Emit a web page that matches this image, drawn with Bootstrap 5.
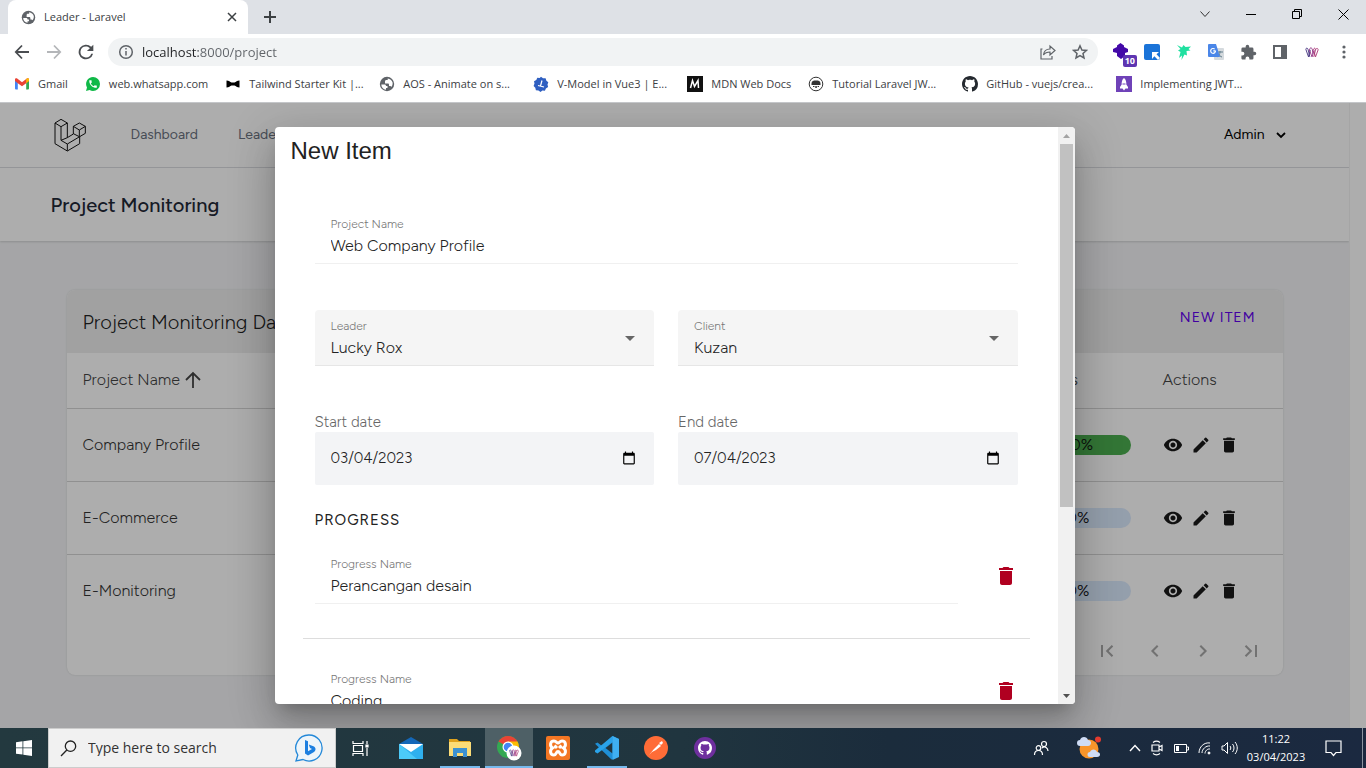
<!DOCTYPE html>
<html lang="en">
<head>
<meta charset="utf-8">
<meta name="viewport" content="width=device-width, initial-scale=1">
<title>Leader - Laravel</title>
<link href="https://cdn.jsdelivr.net/npm/bootstrap@5.3.0/dist/css/bootstrap.min.css" rel="stylesheet">
<style>
  :root { --ui: "Open Sans", "Noto Sans", sans-serif; --app: "Figtree", Inter, "Liberation Sans", sans-serif; }
  body { font-family: var(--ui); font-size: 12px; line-height: 16px; color: #3c4043; background: #fff; }
  svg { display: block; flex: none; }
  button { border: 0; background: none; padding: 0; color: inherit; }
  a { color: inherit; text-decoration: none; }

  /* browser chrome */
  .tabstrip { background: #dee1e6; height: 34px; padding-left: 8px; }
  .tab-item { width: 240px; background: #fff; border-radius: 8px 8px 0 0; padding: 0 10px 0 13px; gap: 8px; font-size: 11px; }
  .newtab { width: 44px; }
  .winbtn { width: 46px; height: 28px; color: #000; }
  .cell { width: 32px; height: 32px; color: #5f6368; }
  .toolbar { height: 36px; padding: 0 6px; }
  .omnibox { height: 28px; border-radius: 14px; background: #f1f3f4; color: #5f6368; margin: 0 6px; padding: 0 2px 0 10px; }
  .omnibox input { border: 0; outline: 0; font-size: 13px; padding: 0 0 0 8px; color: transparent;
    background: linear-gradient(90deg, #202124 64px, #5f6368 64px); -webkit-background-clip: text; background-clip: text; }
  .bookmarks { height: 32px; padding: 0 14px 4px; gap: 17px; font-size: 11px; white-space: nowrap; }
  .bookmarks a { gap: 8px; }
  .bookmarks .cut { width: 137px; }
  .ext-count { right: -1px; bottom: 1px; background: #5e35b1; color: #fff; font-size: 9px; line-height: 12px; font-weight: 700; border-radius: 2px; padding: 0 2px; }

  /* application page */
  .viewport-area { font-family: var(--app); font-weight: 300; border-top: 1px solid #c4c6c9; }
  .app-page { background: #f3f4f6; }
  .gutter { width: 17px; background: #fff; border-left: 1px solid #f4f4f4; }
  .wrap { max-width: 1280px; width: 100%; margin: 0 auto; padding: 0 16px; }
  .topnav { background: #fff; height: 65px; border-bottom: 1px solid #dcdee2; font-size: 14px; font-weight: 400; color: #6b7280; }
  .topnav nav { gap: 40px; margin-left: 43px; }
  .topnav .user { color: #000; gap: 10px; padding-right: 12px; }
  .pagehead { background: #fff; height: 73px; box-shadow: 0 1px 2px rgba(0,0,0,.15); }
  .pagehead h1 { font-size: 20px; line-height: 28px; font-weight: 500; color: #1f2937; margin: 0; }
  .board { margin: 49px 16px 0; background: #fff; border-radius: 8px; box-shadow: 0 0 2px rgba(0,0,0,.15); overflow: hidden; font-size: 16px; color: #333; }
  .board-head { background: #eee; height: 63px; padding: 0 16px; font-size: 20px; color: #222; }
  .newitem { color: #6200ee; font-size: 14px; letter-spacing: 1px; font-weight: 400; padding: 0 11px; margin-bottom: 8px; }
  .board table { width: 100%; table-layout: fixed; }
  .board th { font-weight: 300; height: 55px; padding: 0 16px; border-bottom: 1px solid #d5d5d5; color: #444; }
  .board td { height: 73px; padding: 0 16px; border-bottom: 1px solid #d5d5d5; }
  .board tbody tr:last-child td { border-bottom: 0; }
  .c-prog { width: 146px; }
  .c-act { width: 136px; }
  .meter { height: 20px; border-radius: 10px; background: #dbeafe; color: #111; text-align: center; line-height: 20px; }
  .meter.done { background: #4caf50; }
  .acts { gap: 8px; color: #1a1a1a; }
  .pager { height: 48px; gap: 24px; padding-right: 20px; color: #a8a8a8; }

  /* dialog */
  .scrim { background: rgba(0,0,0,.32); padding: 24px 17px 24px 0; }
  .dialog { width: 800px; max-width: 90%; background: #fff; border-radius: 4px; color: #222; overflow: hidden;
    box-shadow: 0 11px 15px -7px rgba(0,0,0,.2), 0 24px 38px 3px rgba(0,0,0,.14), 0 9px 46px 8px rgba(0,0,0,.12); }
  .dialog h2 { font: 400 24px/32px "Liberation Sans", Arial, sans-serif; padding: 8px 16px; margin: 0; }
  .sheet { padding: 33px 28px 0; }
  .inset { padding: 0 12px; }
  .fld { height: 56px; padding: 8px 16px 0; border-bottom: 1px solid #f0f0f0; position: relative; }
  .fld label { display: block; font-size: 12px; line-height: 16px; color: #777; }
  .fld input, .fld select { display: block; width: 100%; border: 0; outline: 0; background: none; padding: 0; height: 27px; font-size: 16px; font-weight: 300; color: #222; appearance: none; }
  .fld.solid { background: #f5f5f5; border-radius: 4px 4px 0 0; border-bottom-color: #e6e6e6; }
  .fld .caret { position: absolute; right: 19px; top: 26px; color: #666; pointer-events: none; }
  .pair { gap: 24px; margin-top: 46px; }
  .pair > div { flex: 1 1 0; min-width: 0; }
  .datelabel { display: block; font-size: 15px; line-height: 20px; color: #666; }
  .datebox { height: 53px; background: #f3f4f6; padding: 0 18px 2px 16px; border-radius: 2px; }
  .datebox input { border: 0; outline: 0; background: none; padding: 0; font-size: 15px; font-weight: 300; color: #222; width: 100%; }
  .progress-title { font-size: 15px; line-height: 24px; font-weight: 400; letter-spacing: 1px; margin: 23px 0 16px; }
  .stage { gap: 36px; padding-bottom: 34px; }
  .stage .bin { color: #b00020; }
  .rule { border-top: 1px solid #ddd; margin-bottom: 24px; }
  .rail { width: 17px; background: #f1f1f1; }
  .rail span { height: 17px; }
  .thumb { height: 363px; margin: 0 2px; background: #c1c1c1; }

  /* taskbar */
  .taskbar { height: 40px; background: linear-gradient(90deg, #23393f, #20353f 50%, #1b2c3c 65%, #1b2940 100%); color: #fff; }
  .task { width: 48px; height: 40px; margin-right: 1px; }
  .task.view { margin-right: 3px; }
  .task.open { box-shadow: inset 0 -2px 0 #76b9ed; margin: 0 5px 0 4px; width: 40px; }
  .task.active { background: #4e6066; box-shadow: inset 0 -2px 0 #76b9ed; }
  .searchbox { width: 288px; height: 40px; background: #f1f1f1; border: 1px solid #ccc; color: #222; padding: 0 11px; gap: 11px; }
  .searchbox input { border: 0; outline: 0; background: none; font-size: 14px; color: #222; min-width: 0; }
  .searchbox input::placeholder { color: #333; opacity: 1; }
  .tray { width: 24px; height: 40px; }
  .tray.wide { width: 48px; }
  .tray.more { width: 32px; padding-right: 4px; }
  .tray.notes { width: 44px; margin-right: 7px; }
  .clock { width: 70px; text-align: center; font-size: 11px; line-height: 18px; }
  .peek { width: 4px; height: 40px; border-left: 1px solid #8b94a0; }
</style>
</head>
<body class="d-flex flex-column vh-100 overflow-hidden">

<svg width="0" height="0" class="position-absolute" aria-hidden="true">
  <defs>
    <symbol id="globe" viewBox="0 0 16 16"><circle cx="8" cy="8" r="7.200" fill="#5f6368"/><path d="M2.300 8.500h3.200c1 0 1.500.7 1.500 1.500h1.500v2H7v1.700C4.300 13.400 2.300 11.200 2.300 8.500zM6 5.500c0-1 .6-1.500 1.500-1.500h1.200V2.400c2.300.2 4.200 1.800 4.900 4 .2 1.800-.2 3.300-1.300 4.600-.2-.7-.8-1-1.500-1H10V8.700C10 8 9.500 7.500 8.800 7.500H6V6.200z" fill="#fff"/></symbol>
    <symbol id="octo" viewBox="0 0 16 16"><path d="M8 0C3.580 0 0 3.580 0 8c0 3.540 2.290 6.530 5.470 7.590.4.070.55-.170.55-.380 0-.190-.010-.820-.010-1.490-2.010.370-2.530-.490-2.690-.940-.090-.230-.480-.940-.820-1.130-.280-.150-.680-.520-.010-.530.630-.010 1.080.580 1.230.820.720 1.210 1.870.870 2.330.660.070-.520.280-.870.510-1.070-1.780-.2-3.640-.890-3.640-3.950 0-.870.310-1.590.820-2.150-.080-.2-.360-1.020.080-2.120 0 0 .670-.210 2.200.820.640-.180 1.320-.270 2-.270s1.360.090 2 .270c1.530-1.040 2.200-.820 2.200-.820.440 1.100.160 1.920.080 2.120.510.560.820 1.270.820 2.150 0 3.070-1.870 3.750-3.650 3.950.290.250.540.730.540 1.480 0 1.070-.010 1.930-.010 2.200 0 .210.150.460.550.380A8 8 0 0 0 16 8c0-4.420-3.580-8-8-8" fill="currentColor"/></symbol>
    <symbol id="bin" viewBox="0 0 24 24"><path d="M6 19c0 1.100.9 2 2 2h8c1.100 0 2-.9 2-2V7H6v12zM19 4h-3.500l-1-1h-5l-1 1H5v2h14V4z" fill="currentColor"/></symbol>
    <symbol id="eye" viewBox="0 0 24 24"><path d="M12 4.500C7 4.500 2.730 7.610 1 12c1.730 4.390 6 7.500 11 7.500s9.270-3.110 11-7.500c-1.730-4.390-6-7.500-11-7.500zM12 17c-2.760 0-5-2.240-5-5s2.240-5 5-5 5 2.240 5 5-2.240 5-5 5zm0-8c-1.660 0-3 1.340-3 3s1.340 3 3 3 3-1.340 3-3-1.340-3-3-3z" fill="currentColor"/></symbol>
    <symbol id="pen" viewBox="0 0 24 24"><path d="M3 17.250V21h3.750L17.810 9.940l-3.750-3.750L3 17.250zM20.710 7.040a1 1 0 0 0 0-1.410l-2.340-2.340a1 1 0 0 0-1.410 0l-1.830 1.830 3.750 3.750 1.830-1.830z" fill="currentColor"/></symbol>
    <symbol id="cal" viewBox="0 0 24 24"><path d="M20 3h-1V1h-2v2H7V1H5v2H4c-1.100 0-2 .9-2 2v16c0 1.100.9 2 2 2h16c1.100 0 2-.9 2-2V5c0-1.100-.9-2-2-2zm0 18H4V8h16v13z" fill="#000"/></symbol>
    <symbol id="www" viewBox="0 0 16 12"><g fill="none" stroke-width="1"><path d="M1 2.500C1 .5 3 .5 3.500 2.500L5.500 11M1 2.500L4 11 6 3" stroke="#3d2b7a"/><path d="M5 3C5.500 0 8 0 8.500 3L9 8M5 3l3 8 2.500-8" stroke="#8c2a80"/><path d="M9.500 3C10.500 0 12 1 12 3l-2 8M12 3c1-2.500 3-2 3 0l-3 8-2-7" stroke="#a83272"/></g></symbol>
  </defs>
</svg>

<header class="flex-shrink-0">
  <div class="tabstrip d-flex">
    <div class="tab-item d-flex align-items-center">
      <svg width="15" height="15"><use href="#globe"/></svg><span class="flex-grow-1">Leader - Laravel</span>
      <button aria-label="Close tab"><svg width="12" height="12" viewBox="0 0 12 12" stroke="#3c4043" stroke-width="1.500"><path d="M2 2l8 8M10 2l-8 8"/></svg></button>
    </div>
    <button class="newtab d-flex align-items-center justify-content-center" aria-label="New tab"><svg width="12" height="12" viewBox="0 0 12 12" stroke="#3c4043" stroke-width="2"><path d="M6 0v12M0 6h12"/></svg></button>
    <div class="ms-auto d-flex">
      <button class="winbtn d-flex align-items-center justify-content-center" aria-label="Search tabs"><svg width="12" height="12" viewBox="0 0 12 12" fill="none" stroke="#333"><path d="M1.500 3.500L6 8.500l4.500-5"/></svg></button>
      <button class="winbtn d-flex align-items-center justify-content-center" aria-label="Minimize"><svg width="10" height="10" viewBox="0 0 10 10" stroke="#000"><path d="M0 5.500h10"/></svg></button>
      <button class="winbtn d-flex align-items-center justify-content-center" aria-label="Restore"><svg width="10" height="10" viewBox="0 0 10 10" fill="none" stroke="#000"><path d="M.5 2.500h7v7h-7zM2.500 2V.5h7v7H8"/></svg></button>
      <button class="winbtn d-flex align-items-center justify-content-center" aria-label="Close"><svg width="11" height="11" viewBox="0 0 11 11" stroke="#000"><path d="M.5.5l10 10M10.500.5l-10 10"/></svg></button>
    </div>
  </div>

  <div class="toolbar d-flex align-items-center">
    <button class="cell d-flex align-items-center justify-content-center" aria-label="Back"><svg width="16" height="16" viewBox="0 0 16 16" fill="none" stroke="#4a4d51" stroke-width="1.800"><path d="M15 8H2M8 1.500L1.800 8 8 14.500"/></svg></button>
    <button class="cell d-flex align-items-center justify-content-center" aria-label="Forward"><svg width="16" height="16" viewBox="0 0 16 16" fill="none" stroke="#b4b6b9" stroke-width="1.800"><path d="M1 8h13M8 1.500L14.200 8 8 14.500"/></svg></button>
    <button class="cell d-flex align-items-center justify-content-center" aria-label="Reload"><svg width="22" height="22" viewBox="0 0 24 24"><path d="M17.650 6.350A8 8 0 1 0 19.730 14h-2.080A6 6 0 1 1 12 6c1.660 0 3.140.69 4.220 1.780L13 11h7V4l-2.350 2.350z" fill="#4a4d51"/></svg></button>
    <div class="omnibox d-flex align-items-center flex-grow-1">
      <svg width="16" height="16" viewBox="0 0 16 16" fill="none" stroke="#5f6368" stroke-width="1.500"><circle cx="8" cy="8" r="6.300"/><path d="M8 7v4.500M8 4v1.600"/></svg>
      <input class="flex-grow-1" type="text" value="localhost:8000/project" aria-label="Address">
      <button class="cell d-flex align-items-center justify-content-center" aria-label="Share"><svg width="16" height="16" viewBox="0 0 16 16" fill="none" stroke="#5f6368" stroke-width="1.200"><path d="M2.500 5H1v10h11v-3M3.500 11c.4-4 3-6 6.500-6V2l5 4.500L10 11V8c-3 0-5 .8-6.500 3z"/></svg></button>
      <button class="cell d-flex align-items-center justify-content-center" aria-label="Bookmark"><svg width="16" height="16" viewBox="0 0 16 16" fill="none" stroke="#5f6368" stroke-width="1.500"><path d="M8 1.800l1.900 4.200 4.500.4L11 9.500l1 4.500-4-2.400L4 14l1-4.500L1.600 6.400 6.100 6z"/></svg></button>
    </div>
    <button class="cell position-relative" aria-label="Extension"><svg class="mx-auto" width="17" height="18" viewBox="0 0 17 18"><path d="M8.500 0L12 2.500V4l4 2v3l-3 1v3l-4 3-4-3v-3L1 9V6l4-2V2.500z" fill="#4309a8"/></svg><span class="ext-count position-absolute">10</span></button>
    <button class="cell d-flex align-items-center justify-content-center" aria-label="Extension"><svg width="16" height="16" viewBox="0 0 16 16"><rect width="16" height="16" rx="2" fill="#1a73d8"/><path d="M8 8h7l-2.500 2.200L16 14l-2 2-3.600-3.700L8 15z" fill="#fff"/></svg></button>
    <button class="cell d-flex align-items-center justify-content-center" aria-label="Extension"><svg width="16" height="18" viewBox="0 0 16 18"><path d="M1 2l5 2.500L7.500 2l2 2L15 3.500 12.500 6l2 1.500-4 .5.500 4.500-2.500-1L5.500 17 6 12.500 3 15l1.500-6L2 7.500 4.500 6z" fill="#1fe0a0"/></svg></button>
    <button class="cell d-flex align-items-center justify-content-center" aria-label="Translate"><svg width="16" height="16" viewBox="0 0 16 16"><rect x="6" y="4" width="10" height="12" rx="1" fill="#d5dade"/><path d="M9 8h6M12 7v1c0 2-1.500 4-3 5M10.500 10c.8 1.500 2 2.500 3.500 3" stroke="#607d8b" fill="none"/><path d="M1 0h7l4 13H1a1 1 0 0 1-1-1V1a1 1 0 0 1 1-1z" fill="#4a86e8"/><path d="M7.500 6.800H5.300M7.500 6.800a2.400 2.400 0 1 1-.8-1.700" stroke="#fff" fill="none" stroke-width="1.200"/></svg></button>
    <button class="cell d-flex align-items-center justify-content-center" aria-label="Extensions"><svg width="17" height="17" viewBox="0 0 24 24"><path d="M20.500 11H19V7a2 2 0 0 0-2-2h-4V3.500a2.500 2.500 0 0 0-5 0V5H4a2 2 0 0 0-2 2v3.800h1.500a2.700 2.700 0 0 1 0 5.400H2V20c0 1.100.9 2 2 2h3.800v-1.500a2.700 2.700 0 0 1 5.400 0V22H17a2 2 0 0 0 2-2v-4h1.500a2.500 2.500 0 0 0 0-5z" fill="#5f6368"/></svg></button>
    <button class="cell d-flex align-items-center justify-content-center" aria-label="Side panel"><svg width="14" height="14" viewBox="0 0 14 14"><path d="M0 0h14v14H0zM2 2v10h6V2z" fill="#5f6368" fill-rule="evenodd"/></svg></button>
    <button class="cell d-flex align-items-center justify-content-center" aria-label="Profile"><svg width="14" height="11"><use href="#www"/></svg></button>
    <button class="cell d-flex align-items-center justify-content-center" aria-label="Menu"><svg width="4" height="14" viewBox="0 0 4 14" fill="#5f6368"><circle cx="2" cy="2" r="1.600"/><circle cx="2" cy="7" r="1.600"/><circle cx="2" cy="12" r="1.600"/></svg></button>
  </div>

  <nav class="bookmarks d-flex align-items-center" aria-label="Bookmarks">
    <a href="#" class="d-flex align-items-center"><svg width="16" height="16" viewBox="0 0 16 16"><path d="M1 3l2.800 2v8.500H2a1 1 0 0 1-1-1z" fill="#4285f4"/><path d="M15 3l-2.800 2v8.500H14a1 1 0 0 0 1-1z" fill="#34a853"/><path d="M1 3.500C1 2 2.500 2 3.500 2.700L8 6.200l4.500-3.500C13.500 2 15 2 15 3.500V5l-2.800 2.200L8 10.300 3.800 7.200 1 5z" fill="#ea4335"/><path d="M12.200 3v4.200L15 5V3.500C15 2 13.300 2 12.200 3z" fill="#fbbc04"/></svg>Gmail</a>
    <a href="#" class="d-flex align-items-center"><svg width="16" height="16" viewBox="0 0 16 16"><path d="M8 1a7 7 0 0 1 0 14c-1.200 0-2.400-.3-3.400-.9L1 15l1-3.500A7 7 0 0 1 8 1z" fill="#10b948"/><path transform="translate(3 3) scale(.42)" d="M6.620 10.790c1.440 2.830 3.760 5.140 6.590 6.590l2.200-2.200c.27-.27.67-.36 1.020-.24 1.120.37 2.330.57 3.570.57.55 0 1 .45 1 1V20c0 .55-.45 1-1 1-9.390 0-17-7.610-17-17 0-.55.45-1 1-1h3.500c.55 0 1 .45 1 1 0 1.250.2 2.450.57 3.570.11.35.03.74-.25 1.020l-2.200 2.200z" fill="#fff"/></svg>web.whatsapp.com</a>
    <a href="#" class="cut d-flex align-items-center"><svg width="16" height="16" viewBox="0 0 16 16"><path d="M1.500 4.500c2.500 0 3.500 1.500 5 2h3c1.500-.5 2.500-2 5-2v7c-2.500 0-3.500-1.500-5-2h-3c-1.500.5-2.500 2-5 2z" fill="#000"/></svg>Tailwind Starter Kit |...</a>
    <a href="#" class="cut d-flex align-items-center"><svg width="16" height="16"><use href="#globe"/></svg>AOS - Animate on s...</a>
    <a href="#" class="cut d-flex align-items-center"><svg width="16" height="16" viewBox="0 0 16 16"><path d="M8 .8l2 1.500 2.600 0 .8 2.400 1.900 1.500-.8 2.400.6 2.500-2.200 1.300-1 2.300-2.500-.2L7.500 16l-2-1.600-2.600-.2-.6-2.400L.6 10l.9-2.400L1 5.200l2.300-1.200 1-2.200 2.400.3z" fill="#2f5fc1"/><path d="M9 4.500L7.500 10M5 9.500l6 1.500" stroke="#fff" stroke-width="1.200"/></svg>V-Model in Vue3 | E...</a>
    <a href="#" class="d-flex align-items-center"><svg width="16" height="16" viewBox="0 0 16 16"><path fill="#111" d="M0 0h16v16H0z"/><path d="M3.500 12L5.500 4.500l2 6L11 4.500l.5 7.500" fill="none" stroke="#fff" stroke-width="1.500"/></svg>MDN Web Docs</a>
    <a href="#" class="cut d-flex align-items-center"><svg width="16" height="16" viewBox="0 0 16 16"><circle cx="8" cy="8" r="6.800" fill="#fff" stroke="#333"/><path d="M3.500 7.500C3.500 5 5.500 4.500 8 4.500s4.500.5 4.500 3V9h-9zM5 10h1.500v1H5zM7.300 10h1.500v2H7.300zM9.600 10H11v1H9.600z" fill="#333"/></svg>Tutorial Laravel JW...</a>
    <a href="#" class="cut d-flex align-items-center"><svg width="16" height="16" color="#24292f"><use href="#octo"/></svg>GitHub - vuejs/crea...</a>
    <a href="#" class="cut d-flex align-items-center"><svg width="16" height="16" viewBox="0 0 16 16"><path fill="#6f42b8" d="M0 0h16v16H0z"/><path d="M8 2c2 1.500 2.500 4 2.300 6.500L12 11v1.500H9.500L8 14.500l-1.500-2H4V11l1.700-2.500C5.500 6 6 3.500 8 2z" fill="#fff"/><path d="M6.500 8h3" stroke="#6f42b8"/></svg>Implementing JWT...</a>
  </nav>
</header>

<main class="viewport-area position-relative d-flex flex-grow-1 overflow-hidden">
  <div class="app-page flex-grow-1">
    <div class="topnav">
      <div class="wrap d-flex align-items-center h-100">
        <svg width="37" height="37" viewBox="154 35 111 111" fill="none" stroke="#111" stroke-width="3" stroke-linejoin="round"><path d="M166 53l18-11 19 11v44l18-11V63l18-10 18 10v21l-17 10v21l-37 22-37-22zM166 53l18 11 19-11M184 64v41l19 11 37-22M184 105l19-8M203 116v20M221 63l18 11 18-11M239 74v20l-18-9"/></svg>
        <nav class="d-flex"><a href="#">Dashboard</a><a href="#">Leader</a></nav>
        <button class="user ms-auto d-flex align-items-center">Admin <svg width="12" height="12" viewBox="0 0 12 12" fill="none" stroke="#000" stroke-width="1.800"><path d="M2 4l4 4 4-4"/></svg></button>
      </div>
    </div>
    <div class="pagehead"><div class="wrap d-flex align-items-center h-100"><h1>Project Monitoring</h1></div></div>
    <div class="wrap">
      <section class="board">
        <div class="board-head d-flex align-items-center justify-content-between"><span>Project Monitoring Data</span><button class="newitem">NEW ITEM</button></div>
        <table>
          <thead><tr>
            <th><span class="d-flex align-items-center">Project Name <svg class="ms-1" width="18" height="18" viewBox="0 0 18 18" fill="none" stroke="#444" stroke-width="1.800"><path d="M9 17V2M2 9l7-7 7 7"/></svg></span></th>
            <th class="c-prog">Progress</th><th class="c-act">Actions</th></tr></thead>
          <tbody>
            <tr><td>Company Profile</td><td><div class="meter done">100%</div></td><td><div class="acts d-flex"><button aria-label="View"><svg width="20" height="20"><use href="#eye"/></svg></button><button aria-label="Edit"><svg width="20" height="20"><use href="#pen"/></svg></button><button aria-label="Delete"><svg width="20" height="20"><use href="#bin"/></svg></button></div></td></tr>
            <tr><td>E-Commerce</td><td><div class="meter">50%</div></td><td><div class="acts d-flex"><button aria-label="View"><svg width="20" height="20"><use href="#eye"/></svg></button><button aria-label="Edit"><svg width="20" height="20"><use href="#pen"/></svg></button><button aria-label="Delete"><svg width="20" height="20"><use href="#bin"/></svg></button></div></td></tr>
            <tr><td>E-Monitoring</td><td><div class="meter">50%</div></td><td><div class="acts d-flex"><button aria-label="View"><svg width="20" height="20"><use href="#eye"/></svg></button><button aria-label="Edit"><svg width="20" height="20"><use href="#pen"/></svg></button><button aria-label="Delete"><svg width="20" height="20"><use href="#bin"/></svg></button></div></td></tr>
          </tbody>
        </table>
        <div class="pager d-flex align-items-center justify-content-end">
          <button aria-label="First page"><svg width="24" height="24" viewBox="0 0 24 24" fill="none" stroke="currentColor" stroke-width="2"><path d="M7 6v12M17.500 6.700L12.200 12l5.300 5.300"/></svg></button>
          <button aria-label="Previous page"><svg width="24" height="24" viewBox="0 0 24 24" fill="none" stroke="currentColor" stroke-width="2"><path d="M14.700 6.700L9.400 12l5.300 5.300"/></svg></button>
          <button aria-label="Next page"><svg width="24" height="24" viewBox="0 0 24 24" fill="none" stroke="currentColor" stroke-width="2"><path d="M9.300 6.700l5.300 5.300-5.300 5.300"/></svg></button>
          <button aria-label="Last page"><svg width="24" height="24" viewBox="0 0 24 24" fill="none" stroke="currentColor" stroke-width="2"><path d="M17 6v12M6.500 6.700l5.300 5.300-5.300 5.300"/></svg></button>
        </div>
      </section>
    </div>
  </div>
  <div class="gutter flex-shrink-0"></div>

  <div class="scrim position-absolute top-0 start-0 w-100 h-100 d-flex justify-content-center">
    <div class="dialog d-flex" role="dialog" aria-labelledby="dlg-title">
      <div class="flex-grow-1 overflow-hidden">
        <h2 id="dlg-title">New Item</h2>
        <form class="sheet">
          <div class="inset">
            <div class="fld"><label for="pname">Project Name</label><input id="pname" type="text" value="Web Company Profile"></div>
            <div class="pair d-flex">
              <div class="fld solid"><label for="leader">Leader</label><select id="leader"><option>Lucky Rox</option></select><svg class="caret" width="10" height="6" viewBox="0 0 10 6"><path d="M0 0h10L5 5z" fill="currentColor"/></svg></div>
              <div class="fld solid"><label for="client">Client</label><select id="client"><option>Kuzan</option></select><svg class="caret" width="10" height="6" viewBox="0 0 10 6"><path d="M0 0h10L5 5z" fill="currentColor"/></svg></div>
            </div>
            <div class="pair d-flex">
              <div><label class="datelabel" for="start">Start date</label><div class="datebox d-flex align-items-center"><input id="start" type="text" value="03/04/2023"><button type="button" aria-label="Pick start date"><svg width="14" height="14"><use href="#cal"/></svg></button></div></div>
              <div><label class="datelabel" for="end">End date</label><div class="datebox d-flex align-items-center"><input id="end" type="text" value="07/04/2023"><button type="button" aria-label="Pick end date"><svg width="14" height="14"><use href="#cal"/></svg></button></div></div>
            </div>
            <h3 class="progress-title">PROGRESS</h3>
            <div class="stage d-flex align-items-center"><div class="fld flex-grow-1"><label for="s1">Progress Name</label><input id="s1" type="text" value="Perancangan desain"></div><button type="button" class="bin" aria-label="Delete stage"><svg width="24" height="24"><use href="#bin"/></svg></button></div>
          </div>
          <div class="rule"></div>
          <div class="inset">
            <div class="stage d-flex align-items-center"><div class="fld flex-grow-1"><label for="s2">Progress Name</label><input id="s2" type="text" value="Coding"></div><button type="button" class="bin" aria-label="Delete stage"><svg width="24" height="24"><use href="#bin"/></svg></button></div>
          </div>
        </form>
      </div>
      <div class="rail d-flex flex-column flex-shrink-0" aria-hidden="true">
        <span class="d-flex align-items-center justify-content-center"><svg width="7" height="4" viewBox="0 0 7 4"><path d="M0 4h7L3.500 0z" fill="#a3a3a3"/></svg></span>
        <div class="thumb"></div>
        <span class="mt-auto d-flex align-items-center justify-content-center"><svg width="7" height="4" viewBox="0 0 7 4"><path d="M0 0h7L3.500 4z" fill="#505050"/></svg></span>
      </div>
    </div>
  </div>
</main>

<footer class="taskbar d-flex align-items-center flex-shrink-0">
  <button class="tray wide d-flex align-items-center justify-content-center" aria-label="Start"><svg width="16" height="16" viewBox="0 0 16 16" fill="#fff"><path d="M0 2.200l6.500-.9v6.200H0zM7.300 1.200L16 0v7.500H7.300zM0 8.300h6.500v6.300L0 13.700zM7.300 8.300H16V16l-8.700-1.200z"/></svg></button>
  <div class="searchbox d-flex align-items-center">
    <svg width="17" height="17" viewBox="0 0 17 17" fill="none" stroke="#222" stroke-width="1.300"><circle cx="10.500" cy="6.200" r="5.200"/><path d="M6.800 10L1 16"/></svg>
    <input class="flex-grow-1 p-0" type="text" placeholder="Type here to search" aria-label="Type here to search">
    <svg width="30" height="30" viewBox="0 0 30 30"><path d="M15 2a13 13 0 1 1-6 24.500L2 28l1.800-6A13 13 0 0 1 15 2z" fill="#eef5fa" stroke="#2388d8" stroke-width="1.300"/><path d="M11 7l3 1.200v10L18 16l-2-1-1.200-3.500L20 13.500c2.500 2 1.500 4.500 0 5.500L14 22.500l-3-2z" fill="#1c7fe0"/></svg>
  </div>
  <button class="task view d-flex align-items-center justify-content-center" aria-label="Task view"><svg width="17" height="17" viewBox="0 0 17 17" fill="none" stroke="#fff" stroke-width="1.200"><path d="M1 1v2.500h10V1M1 16v-2.500h10V16M1.500 5.500h9v6h-9zM15 1v3M15 8v8"/><path fill="#fff" d="M14 5h2v2h-2z"/></svg></button>
  <button class="task d-flex align-items-center justify-content-center" aria-label="Mail"><svg width="24" height="24" viewBox="0 0 24 24"><path d="M0 8l12-7 12 7v3H0z" fill="#1467b8"/><path d="M0 8h24v15H0z" fill="#2fb0ee"/><path d="M0 8h24L12 16z" fill="#fff"/><path d="M0 23V8l18 15z" fill="#4ccaf8"/></svg></button>
  <button class="task open d-flex align-items-center justify-content-center" aria-label="File Explorer"><svg width="22" height="20" viewBox="0 0 22 20"><path d="M0 1h8l2 2h11v5H0z" fill="#dfa21d"/><path d="M0 4h22v14H0z" fill="#fbdc77"/><path d="M4 10h14v9h-4v-4H8v4H4z" fill="#3c91d0"/></svg></button>
  <button class="task active d-flex align-items-center justify-content-center" aria-label="Chrome"><svg width="26" height="26" viewBox="0 0 26 26"><circle cx="12" cy="12" r="11" fill="#34a853"/><path d="M12 12L2.500 6.500A11 11 0 0 1 21.500 6.500z" fill="#ea4335"/><path d="M12 6.500h9.500A11 11 0 0 1 13 23l4-9z" fill="#fbbc04"/><circle cx="12" cy="12" r="5.500" fill="#fff"/><circle cx="12" cy="12" r="4.300" fill="#4285f4"/><circle cx="18" cy="18" r="7.500" fill="#fff"/><use href="#www" x="13" y="14" width="10" height="8"/></svg></button>
  <button class="task d-flex align-items-center justify-content-center" aria-label="XAMPP"><svg width="24" height="24" viewBox="0 0 24 24"><rect width="24" height="24" rx="2" fill="#f37623"/><path d="M8 5c2.500 0 2.500 2 4 2s1.500-2 4-2c4 0 4.500 5 1.500 7 3 2 2.500 7-1.500 7-2.500 0-2-3.500-4-3.500S10.500 19 8 19c-4 0-4.500-5-1.500-7C3.500 10 4 5 8 5zM8.500 9.500l2.500 2.500M15.500 9.500L13 12" fill="none" stroke="#fff" stroke-width="3"/></svg></button>
  <button class="task open d-flex align-items-center justify-content-center" aria-label="Visual Studio Code"><svg width="24" height="24" viewBox="0 0 24 24"><path d="M17.500 0L7 10 2.500 6.500 0 7.800l16.500 15.700 7.500-3V3z" fill="#1f8fd6"/><path d="M0 16l2.500 1.500L17.500 6V0L0 14.500z" fill="#2aa3ea"/><path d="M17.500 6.500v11L10.500 12z" fill="#20353f"/><path d="M17.500 0L24 3v18l-6.500 3z" fill="#3fb0f2"/></svg></button>
  <button class="task d-flex align-items-center justify-content-center" aria-label="Postman"><svg width="24" height="24" viewBox="0 0 24 24"><circle cx="12" cy="12" r="12" fill="#ff6c37"/><path d="M5 19l5-6 5-5 2 2-5 4-4 2zM15 7l3-2 1 2-2 2z" fill="#fff"/></svg></button>
  <button class="task d-flex align-items-center justify-content-center" aria-label="GitHub Desktop"><svg width="22" height="22" viewBox="0 0 22 22" color="#fff"><circle cx="11" cy="11" r="11" fill="#6e2f9e"/><use href="#octo" x="4" y="4" width="14" height="14"/></svg></button>

  <div class="ms-auto d-flex align-items-center">
    <button class="tray wide d-flex align-items-center justify-content-center" aria-label="People"><svg width="16" height="16" viewBox="0 0 16 16" fill="none" stroke="#fff" stroke-width="1.200"><circle cx="11" cy="4" r="2.500"/><circle cx="5.500" cy="8" r="2.300"/><path d="M1.500 15c0-6 8-6 8 0M9 8c3-2.500 6 0 6 3"/></svg></button>
    <button class="tray wide d-flex align-items-center justify-content-center" aria-label="Weather"><svg width="26" height="24" viewBox="0 0 26 24"><circle cx="13" cy="13" r="9.500" fill="#f9952a"/><path d="M4 10a3 3 0 0 1 0-6c1-4 7-4 8 0 4 0 4 6 0 6zM14 21a2.500 2.500 0 0 1 0-5c1-3.500 6-3.500 7 0 4 0 4 5 0 5z" fill="#cfdcf5"/><circle cx="22" cy="3.500" r="3" fill="#e33b2e"/></svg></button>
    <button class="tray more d-flex align-items-center justify-content-end" aria-label="Hidden icons"><svg width="12" height="8" viewBox="0 0 12 8" fill="none" stroke="#fff" stroke-width="1.400"><path d="M1 7l5-5.500L11 7"/></svg></button>
    <button class="tray d-flex align-items-center justify-content-center" aria-label="Meet now"><svg width="12" height="16" viewBox="0 0 12 16" fill="none" stroke="#fff" stroke-width="1.200"><path d="M1 5h7v6H1zM8 7l3-1.500v5L8 9M2 2.500c2-1.500 5-1.500 7 0M2 13.500c2 1.500 5 1.500 7 0"/></svg></button>
    <button class="tray d-flex align-items-center justify-content-center" aria-label="Battery"><svg width="15" height="9" viewBox="0 0 15 9" fill="none" stroke="#fff"><path d="M.5.5h12v8H.5zM13 3h1.500v3H13"/><path d="M2 2h3v5H2z" fill="#fff" stroke="none"/></svg></button>
    <button class="tray d-flex align-items-center justify-content-center" aria-label="Network"><svg width="14" height="14" viewBox="0 0 14 14" fill="none" stroke="#fff"><path d="M1 12C1 6 6 1 12 2M4 12c0-4 4-7.500 8-7M7 12.500c0-2.500 2.500-5 5-4.500"/><circle cx="11" cy="12" r="1" fill="#fff"/></svg></button>
    <button class="tray d-flex align-items-center justify-content-center" aria-label="Volume"><svg width="17" height="14" viewBox="0 0 17 14" fill="none" stroke="#fff"><path d="M1 5h2l3.500-3.500v11L3 9H1zM9 5c1 1 1 3 0 4M11.500 3c2 2 2 6 0 8M14 1c3 3.500 3 8.500 0 12"/></svg></button>
    <div class="clock">11:22<br>03/04/2023</div>
    <button class="tray notes d-flex align-items-center justify-content-center" aria-label="Notifications"><svg width="17" height="17" viewBox="0 0 17 17" fill="none" stroke="#fff" stroke-width="1.200"><path d="M1 1h15v11.500h-5L8.500 15.500 6 12.500H1z"/></svg></button>
    <button class="peek" aria-label="Show desktop"></button>
  </div>
</footer>

<script src="https://cdn.jsdelivr.net/npm/bootstrap@5.3.0/dist/js/bootstrap.bundle.min.js"></script>
</body>
</html>
